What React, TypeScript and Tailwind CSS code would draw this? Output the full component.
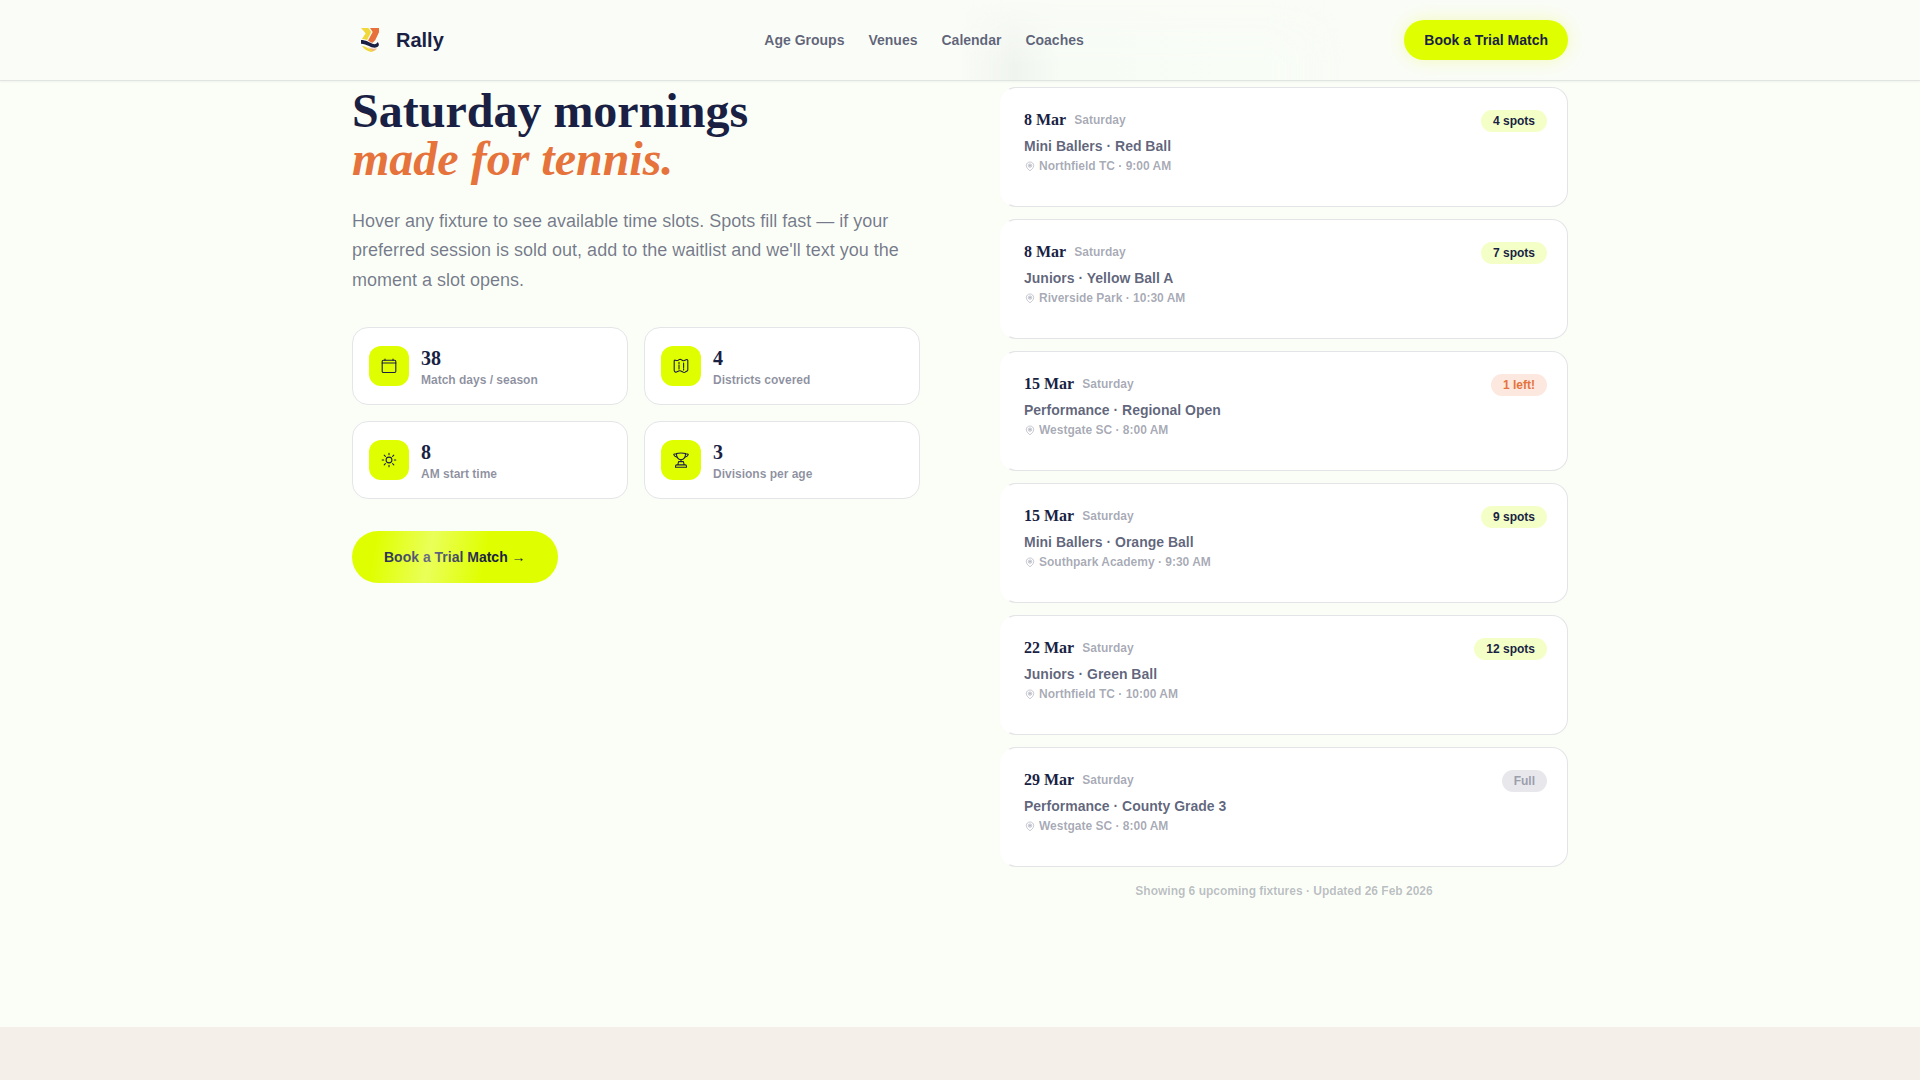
import React from 'react';

type Tone = 'open' | 'low' | 'full';

interface Fixture {
  date: string;
  title: string;
  place: string;
  spots: string;
  tone: Tone;
}

interface Stat {
  value: string;
  label: string;
  icon: React.ReactNode;
}

const toneClass: Record<Tone, string> = {
  open: 'bg-[#f4ffc8] text-[#1a1f44]',
  low: 'bg-[#fde8e0] text-[#e5733b]',
  full: 'bg-[#e8e8ec] text-[#9c9eae]',
};

const fixtures: Fixture[] = [
  { date: '8 Mar', title: 'Mini Ballers · Red Ball', place: 'Northfield TC · 9:00 AM', spots: '4 spots', tone: 'open' },
  { date: '8 Mar', title: 'Juniors · Yellow Ball A', place: 'Riverside Park · 10:30 AM', spots: '7 spots', tone: 'open' },
  { date: '15 Mar', title: 'Performance · Regional Open', place: 'Westgate SC · 8:00 AM', spots: '1 left!', tone: 'low' },
  { date: '15 Mar', title: 'Mini Ballers · Orange Ball', place: 'Southpark Academy · 9:30 AM', spots: '9 spots', tone: 'open' },
  { date: '22 Mar', title: 'Juniors · Green Ball', place: 'Northfield TC · 10:00 AM', spots: '12 spots', tone: 'open' },
  { date: '29 Mar', title: 'Performance · County Grade 3', place: 'Westgate SC · 8:00 AM', spots: 'Full', tone: 'full' },
];

const iconProps = {
  className: 'w-4 h-4',
  viewBox: '0 0 16 16',
  fill: 'none',
  stroke: 'currentColor',
  strokeWidth: 1.1,
  strokeLinecap: 'round' as const,
  strokeLinejoin: 'round' as const,
  'aria-hidden': true,
};

const CalendarIcon = () => (
  <svg {...iconProps}>
    <rect x="1.2" y="2.2" width="13.6" height="12.3" rx="1.2" />
    <path d="M1.2 5h13.6M4 1v1.2M12 1v1.2" />
  </svg>
);

const MapIcon = () => (
  <svg {...iconProps}>
    <path d="M1.2 3.2c0-.9.5-1.2 1.2-1 1.2.4 1.8.5 2.7 0l1-.6c.7-.4 1.2-.4 1.9 0l1.6.8c.9.5 1.5.4 2.4-.1l1.2-.6c.8-.4 1.6 0 1.6.9v9.2c0 .6-.2.9-.7 1.200l-1.900 1.100c-.8.5-1.400.5-2.200 0l-2.200-1.100c-.8-.4-1.300-.4-2.100 0l-1.600.8c-.9.5-1.500.4-2.200-.1-.5-.4-.7-.7-.7-1.400z" />
    <path d="M6 4.200v1.600M6 7v4M10.600 5v4.600M10.600 10.800v1.200" />
  </svg>
);

const SunIcon = () => (
  <svg {...iconProps}>
    <circle cx="8" cy="8" r="2.9" />
    <path d="M8 1.200v1.500M8 13.300v1.500M1.200 8h1.500M13.300 8h1.500M3.200 3.200l1.200 1.200M11.600 11.600l1.200 1.200M3.200 12.800l1.200-1.200M11.600 4.400l1.200-1.200" />
  </svg>
);

const TrophyIcon = () => (
  <svg {...iconProps}>
    <path d="M3.500 1.500c1.500-.7 7.500-.7 9 0 .2 3.400-1.500 6.200-4.500 6.200S3.300 4.900 3.500 1.500z" />
    <path d="M3.500 2H1.300c-.5 0-.6.4-.4.9.5 1.400 1.600 2.100 3.300 2.400M12.500 2h2.200c.5 0 .6.4.4.9-.5 1.400-1.600 2.100-3.300 2.400" />
    <path d="M8 7.700v1.700M5.600 9.600h4.800l.8 3.200H4.800zM2.500 15.200v-1c0-.8.5-1.300 1.200-1.300h8.600c.7 0 1.200.5 1.200 1.300v1z" />
  </svg>
);

const PinIcon = () => (
  <svg className="h-3 w-3" viewBox="0 0 12 12" fill="none" stroke="currentColor" strokeWidth="0.6" aria-hidden="true">
    <path d="M6 2C3.800 2 2.300 3.500 2.300 5.500c0 2.500 2.300 4.100 3.700 5.300 1.400-1.200 3.700-2.800 3.700-5.300C9.700 3.500 8.200 2 6 2z" />
    <path d="M4.300 5.600a1.700 1.700 0 1 0 3.400 0 1.700 1.700 0 1 0-3.400 0M6 4.600v2M5 5.600h2" />
  </svg>
);

const LogoMark = () => (
  <svg className="h-6 w-[18px]" viewBox="0 0 54 72" aria-hidden="true">
    <path d="M0 0h22l9 12-13 24C13 34 8 33 3 33l11-17z" fill="#f0d83c" />
    <path d="M27 0h27v13L43 36l-8 8c-5-1-9-4-14-6l14-26z" fill="#e8703a" />
    <path d="M3 53c11 2 19 9 30 11 6 1 11 0 15-2-5 5-11 8-18 10C18 69 8 62 3 53z" fill="#f0d83c" />
    <path d="M20 58c9 4 18 5 28 3-4 4-8 7-13 9-3-5-9-8-15-12z" fill="#f2b08c" />
    <path d="M0 36c15 0 24 7 34 11 8 3 13 1 16-5 5 4 5 12-1 15-9 4-17 1-25-3-8-4-15-7-24-7z" fill="#1a1f44" />
  </svg>
);

const stats: Stat[] = [
  { value: '38', label: 'Match days / season', icon: <CalendarIcon /> },
  { value: '4', label: 'Districts covered', icon: <MapIcon /> },
  { value: '8', label: 'AM start time', icon: <SunIcon /> },
  { value: '3', label: 'Divisions per age', icon: <TrophyIcon /> },
];

const navLinks = ['Age Groups', 'Venues', 'Calendar', 'Coaches'];

const Header: React.FC = () => (
  <header className="sticky top-0 z-10 overflow-hidden border-b border-[#e2e4e1] bg-[#fafcf7] shadow-[0_1px_2px_rgba(26,31,68,0.05)]">
    <div className="absolute inset-y-0 left-1/2 w-96 bg-[linear-gradient(90deg,transparent_0%,#f0f4ef_14%,#f7fcf5_26%,#f8fdf6_80%,transparent_100%)] mask-t-from-20%" />
    <div className="relative mx-auto flex h-20 max-w-7xl items-center justify-between px-8">
      <a href="#" className="flex items-center gap-2">
        <span className="flex h-9 w-9 items-center justify-center">
          <LogoMark />
        </span>
        <span className="text-xl font-bold">Rally</span>
      </a>
      <nav className="flex items-center gap-6">
        {navLinks.map((link) => (
          <a key={link} href="#" className="text-sm font-semibold text-[#1a1f44]/70">{link}</a>
        ))}
      </nav>
      <button className="h-10 rounded-full bg-[#dfff00] px-5 text-sm font-bold shadow-[0_0_18px_rgba(223,255,0,0.25)]">
        Book a Trial Match
      </button>
    </div>
  </header>
);

const StatCard: React.FC<Stat> = ({ value, label, icon }) => (
  <div className="flex items-center gap-3 rounded-2xl border border-[#e4e5e8] bg-white p-4">
    <div className="flex h-10 w-10 items-center justify-center rounded-xl bg-[#dfff00]">{icon}</div>
    <div>
      <div className="font-['Liberation_Serif',serif] text-xl font-bold">{value}</div>
      <div className="text-xs font-semibold text-[#1a1f44]/50">{label}</div>
    </div>
  </div>
);

const FixtureCard: React.FC<Fixture> = ({ date, title, place, spots, tone }) => (
  <li className="flex min-h-30 items-start justify-between rounded-2xl border border-l-4 border-[#e3e4e8] border-l-transparent bg-white p-5">
    <div>
      <div className="mb-1 flex items-center gap-2">
        <span className="font-['Liberation_Serif',serif] text-base font-bold">{date}</span>
        <span className="text-xs font-semibold text-[#1a1f44]/40">Saturday</span>
      </div>
      <div className="text-sm font-semibold text-[#1a1f44]/70">{title}</div>
      <div className="mt-0.5 flex items-center gap-[3px] text-xs font-semibold text-[#1a1f44]/40">
        <PinIcon />
        {place}
      </div>
    </div>
    <span className={`mt-0.5 rounded-full px-3 py-[3px] text-xs font-bold ${toneClass[tone]}`}>{spots}</span>
  </li>
);

const App: React.FC = () => {
  return (
    <div className="flex min-h-screen flex-col bg-[#f4efe9] font-['Liberation_Sans',sans-serif] text-[#1a1f44]">
      <Header />
      <main className="bg-[#fbfef7] pt-1.5 pb-32">
        <div className="mx-auto grid max-w-7xl grid-cols-2 items-start gap-20 px-8">
          <section>
            <h2 className="mb-6 font-['Liberation_Serif',serif] text-5xl leading-none font-bold">
              Saturday mornings
              <br />
              <em className="text-[#e5733b]">made for tennis.</em>
            </h2>
            <p className="mb-8 text-lg leading-relaxed text-[#1a1f44]/60">
              Hover any fixture to see available time slots. Spots fill fast — if your preferred session is sold out, add
              to the waitlist and we'll text you the moment a slot opens.
            </p>
            <div className="mb-8 grid grid-cols-2 gap-4">
              {stats.map((stat) => (
                <StatCard key={stat.label} {...stat} />
              ))}
            </div>
            <button className="relative overflow-hidden rounded-full bg-[#dfff00] px-8 py-4 text-sm font-bold">
              Book a Trial Match →
              <span className="absolute inset-0 bg-[linear-gradient(100deg,transparent_12%,rgba(255,255,255,0.35)_38%,transparent_64%)]" />
            </button>
          </section>
          <section>
            <ul className="flex flex-col gap-3">
              {fixtures.map((fixture) => (
                <FixtureCard key={fixture.date + fixture.title} {...fixture} />
              ))}
            </ul>
            <p className="mt-4 text-center text-xs font-semibold text-[#1a1f44]/30">
              Showing 6 upcoming fixtures · Updated 26 Feb 2026
            </p>
          </section>
        </div>
      </main>
    </div>
  );
};

export default App;
